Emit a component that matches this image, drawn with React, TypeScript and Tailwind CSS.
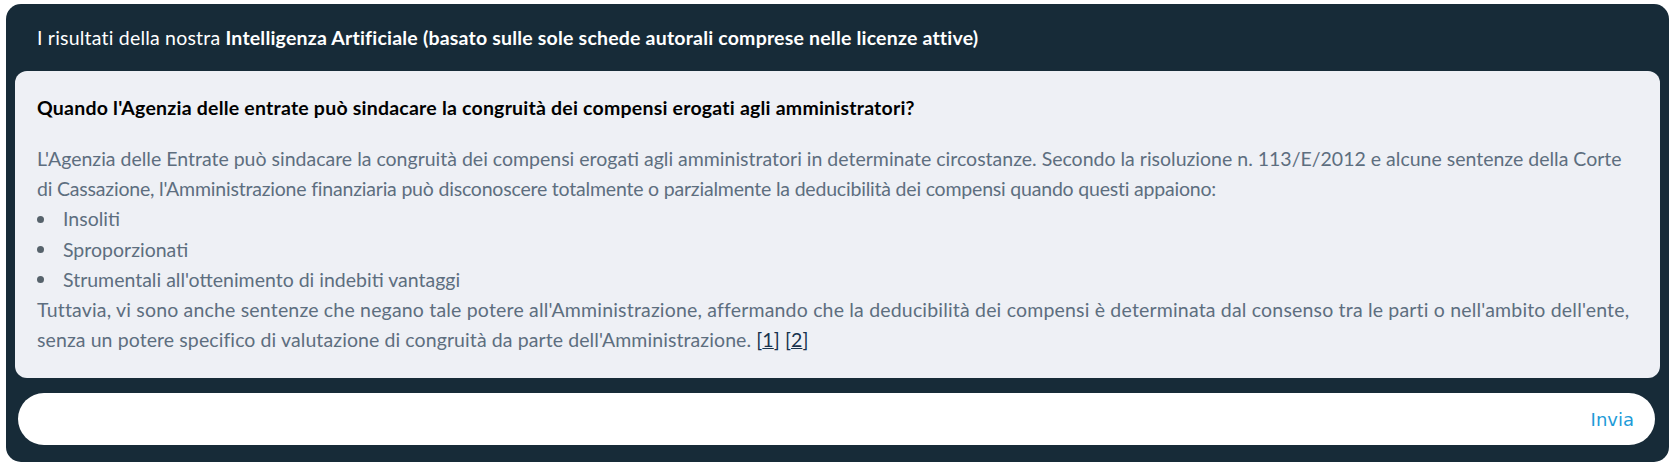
import React from "react";

const body = "text-[#5d6e7f]";

export default function App() {
  return (
    <div className="w-[1674px] h-[467px] bg-white pt-[4px] pl-[6px] pr-[5px]" style={{ fontFamily: "Lato, 'Open Sans', sans-serif" }}>
      <div className="h-[458px] rounded-[15px] bg-[#172b38] px-[9px] flex flex-col">
        <div className="h-[67px] flex items-center pl-[22px] text-white text-[19.5px] tracking-[0.2px]">
          <span>
            I risultati della nostra{" "}
            <span className="font-bold">Intelligenza Artificiale (basato sulle sole schede autorali comprese nelle licenze attive)</span>
          </span>
        </div>
        <div className="h-[307px] rounded-[12px] bg-[#eef0f5] pl-[22px] pr-[10px] pt-[23px]">
          <div className="text-[19.5px] tracking-[0.22px] font-bold text-black leading-[27px] whitespace-nowrap">
            Quando l'Agenzia delle entrate può sindacare la congruità dei compensi erogati agli amministratori?
          </div>
          <div className={`mt-[23px] text-[19.5px] leading-[30.2px] ${body} whitespace-nowrap`}>
            <p>
              <span>
                L'Agenzia delle Entrate può sindacare la congruità dei compensi erogati agli amministratori in determinate circostanze. Secondo la risoluzione n. 113/E/2012 e alcune sentenze della Corte
              </span>
              <br />
              <span className="tracking-[-0.2px]">
                di Cassazione, l'Amministrazione finanziaria può disconoscere totalmente o parzialmente la deducibilità dei compensi quando questi appaiono:
              </span>
            </p>
            <ul>
              {["Insoliti", "Sproporzionati", "Strumentali all'ottenimento di indebiti vantaggi"].map((t) => (
                <li key={t} className="flex items-center">
                  <span className="w-[7px] h-[7px] rounded-full bg-[#56626b] mr-[19px]" />
                  <span>{t}</span>
                </li>
              ))}
            </ul>
            <p>
              <span className="tracking-[0.18px]">
                Tuttavia, vi sono anche sentenze che negano tale potere all'Amministrazione, affermando che la deducibilità dei compensi è determinata dal consenso tra le parti o nell'ambito dell'ente,
              </span>
              <br />
              <span className="tracking-[0.09px]">
                senza un potere specifico di valutazione di congruità da parte dell'Amministrazione.{" "}
                <span className="text-[#17324d]">[<span className="underline">1</span>]</span>{" "}
                <span className="text-[#17324d]">[<span className="underline">2</span>]</span>
              </span>
            </p>
          </div>
        </div>
        <div className="mt-[15px] ml-[3px] mr-[5px] h-[52px] rounded-full bg-white flex items-center justify-end pr-[21px]">
          <span className="text-[18px] text-[#1e9bd8]" style={{ fontFamily: "'DejaVu Sans', sans-serif" }}>Invia</span>
        </div>
      </div>
    </div>
  );
}
